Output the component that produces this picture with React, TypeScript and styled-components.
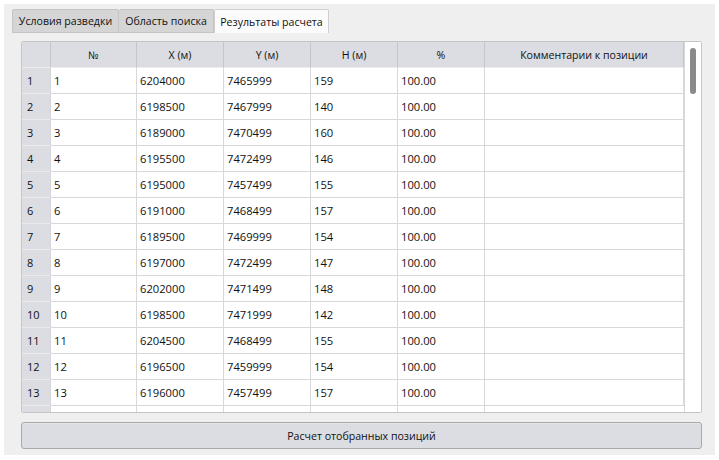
import React from "react";
import styled, { createGlobalStyle } from "styled-components";

const Global = createGlobalStyle`
  html, body { margin: 0; padding: 0; background: #ffffff; }
  body { font-family: "Open Sans", "Noto Sans", sans-serif; }
  * { box-sizing: border-box; }
`;

const Page = styled.div`
  width: 719px;
  height: 460px;
  padding: 4px 4px 5px 4px;
`;

const Panel = styled.div`
  width: 711px;
  height: 451px;
  background: #efefef;
  display: flex;
  flex-direction: column;
  padding: 5px 13px 7px 8px;
`;

const TabBar = styled.div`
  display: flex;
  height: 24px;
`;

const Tab = styled.div<{ $active?: boolean; $w: number }>`
  width: ${(p) => p.$w}px;
  height: 24px;
  display: flex;
  align-items: center;
  justify-content: center;
  font-size: 10.6px;
  font-weight: 500;
  color: #111;
  white-space: nowrap;
  background: ${(p) => (p.$active ? "#fbfbfb" : "#d5d5d5")};
  border: 1px solid ${(p) => (p.$active ? "#cfcfcf" : "#c4c4c4")};
  border-bottom: ${(p) => (p.$active ? "none" : "1px solid #c4c4c4")};
  border-left: ${(p) => (p.$active ? "1px solid #cfcfcf" : "none")};
  border-radius: 2px 2px 0 0;
  &:first-child { border-left: 1px solid #c4c4c4; }
`;

const Body = styled.div`
  flex: 1;
  display: flex;
  flex-direction: column;
  padding: 8px 0 0 9px;
  gap: 9px;
`;

const TableFrame = styled.div`
  height: 372px;
  border: 1px solid #c6c6c6;
  border-radius: 2px;
  background: #ffffff;
  display: flex;
  overflow: hidden;
`;

const Grid = styled.div`
  flex: 1;
  display: grid;
  grid-template-columns: 29px 86px 87px 87px 87px 87px 199px;
  grid-auto-rows: 26px;
  overflow: hidden;
  align-content: start;
`;

const HeadCell = styled.div`
  background: #dcdde2;
  border-right: 1px solid #c5c6cb;
  border-bottom: 1px solid #ececec;
  font-size: 10.6px;
  font-weight: 500;
  color: #111;
  display: flex;
  align-items: center;
  justify-content: center;
`;

const RowHead = styled.div`
  background: #dcdde2;
  border-bottom: 1px solid #eaeaea;
  border-right: 1px solid #d4d5da;
  font-size: 11px;
  font-weight: 500;
  color: #111;
  display: flex;
  align-items: center;
  padding-left: 5px;
`;

const Cell = styled.div`
  border-right: 1px solid #d8d8d8;
  border-bottom: 1px solid #d8d8d8;
  font-size: 11.2px;
  color: #111;
  display: flex;
  align-items: center;
  padding-left: 3px;
  white-space: nowrap;
  &:last-child { border-right: none; }
`;

const ScrollTrack = styled.div`
  width: 17px;
  border-left: 1px solid #d8d8d8;
  background: #ffffff;
  padding: 6px 0 0 5px;
`;

const Thumb = styled.div`
  width: 6px;
  height: 46px;
  border-radius: 3px;
  background: #8a8a8a;
`;

const Button = styled.button`
  height: 27px;
  width: 100%;
  background: #dcdde2;
  border: 1px solid #a9a9ab;
  border-radius: 3px;
  font-family: "Open Sans", "Noto Sans", sans-serif;
  font-size: 10.6px;
  font-weight: 500;
  color: #111;
  padding: 0;
  box-shadow: inset 0 1px 0 #e6e7ea;
`;

const rows: [string, string, string, string][] = [
  ["6204000", "7465999", "159", "100.00"],
  ["6198500", "7467999", "140", "100.00"],
  ["6189000", "7470499", "160", "100.00"],
  ["6195500", "7472499", "146", "100.00"],
  ["6195000", "7457499", "155", "100.00"],
  ["6191000", "7468499", "157", "100.00"],
  ["6189500", "7469999", "154", "100.00"],
  ["6197000", "7472499", "147", "100.00"],
  ["6202000", "7471499", "148", "100.00"],
  ["6198500", "7471999", "142", "100.00"],
  ["6204500", "7468499", "155", "100.00"],
  ["6196500", "7459999", "154", "100.00"],
  ["6196000", "7457499", "157", "100.00"],
  ["", "", "", ""],
];

const headers = ["", "№", "X (м)", "Y (м)", "H (м)", "%", "Комментарии к позиции"];

export default function App() {
  return (
    <Page>
      <Global />
      <Panel>
        <TabBar>
          <Tab $w={107}>Условия разведки</Tab>
          <Tab $w={95}>Область поиска</Tab>
          <Tab $w={115} $active>Результаты расчета</Tab>
        </TabBar>
        <Body>
          <TableFrame>
            <Grid>
              {headers.map((h, i) => (
                <HeadCell key={i}>{h}</HeadCell>
              ))}
              {rows.map((r, i) => (
                <React.Fragment key={i}>
                  <RowHead>{r[0] ? i + 1 : ""}</RowHead>
                  <Cell>{r[0] ? i + 1 : ""}</Cell>
                  <Cell>{r[0]}</Cell>
                  <Cell>{r[1]}</Cell>
                  <Cell>{r[2]}</Cell>
                  <Cell>{r[3]}</Cell>
                  <Cell></Cell>
                </React.Fragment>
              ))}
            </Grid>
            <ScrollTrack>
              <Thumb />
            </ScrollTrack>
          </TableFrame>
          <Button>Расчет отобранных позиций</Button>
        </Body>
      </Panel>
    </Page>
  );
}
